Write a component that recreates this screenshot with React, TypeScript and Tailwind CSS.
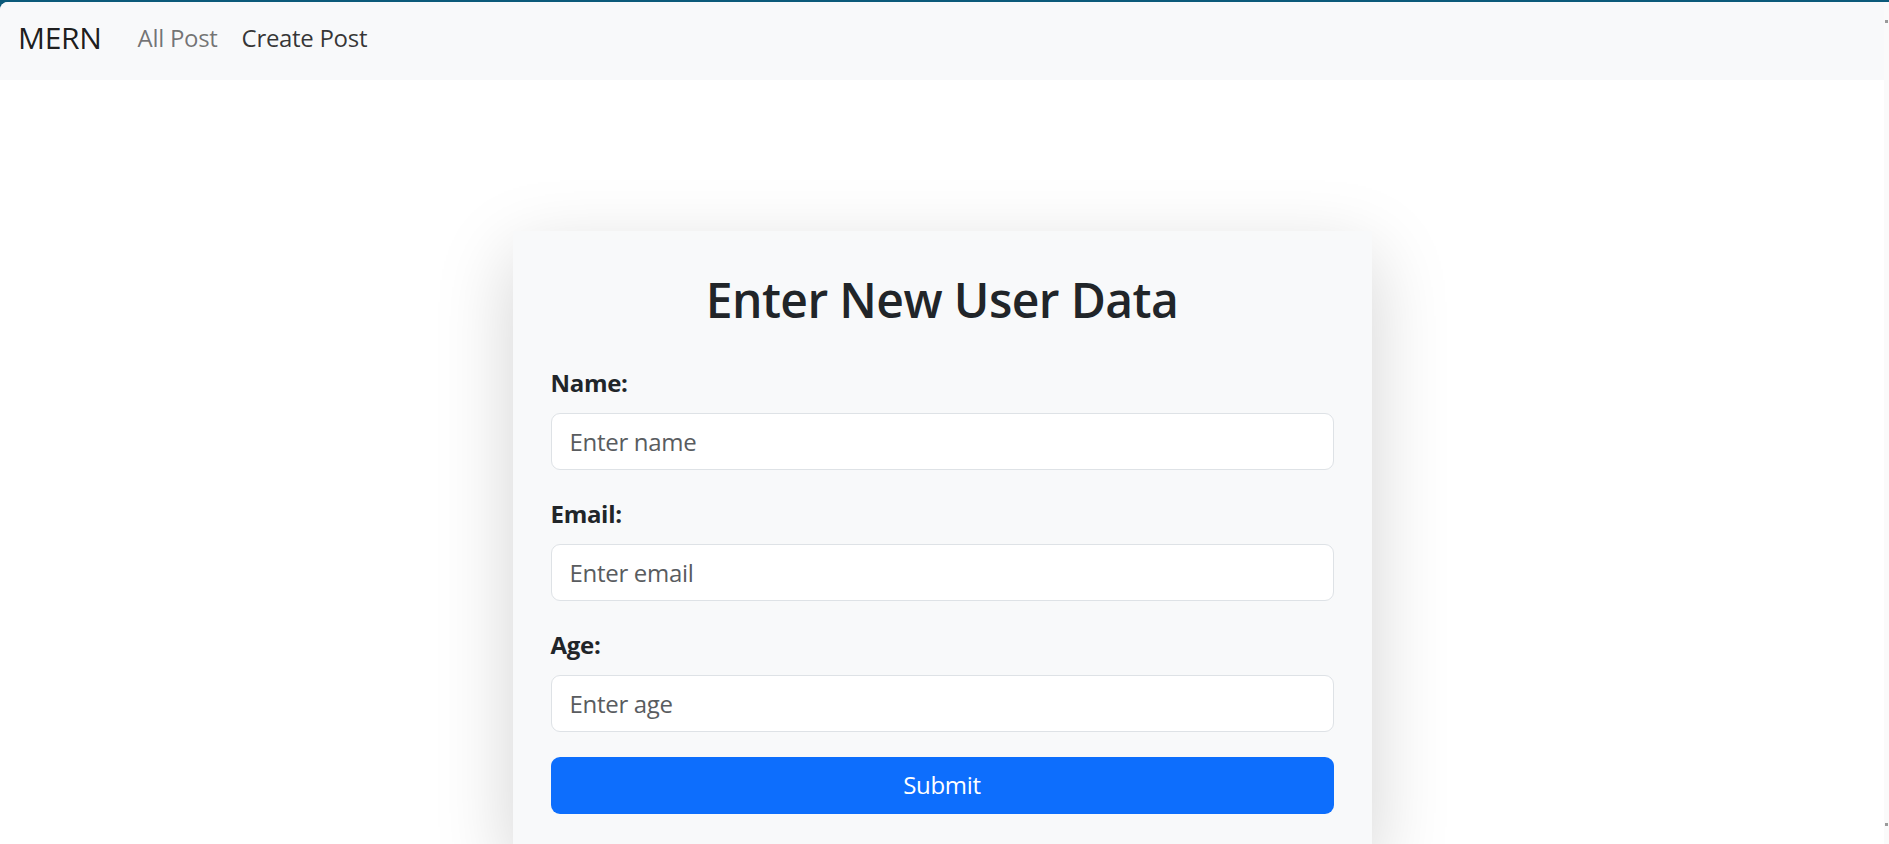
import { useState } from 'react'

const font = { fontFamily: '"Open Sans", "Noto Sans", sans-serif' }

export default function App() {
  const [form, setForm] = useState({ name: '', email: '', age: '' })

  const fields = [
    { key: 'name', label: 'Name:', type: 'text', placeholder: 'Enter name' },
    { key: 'email', label: 'Email:', type: 'email', placeholder: 'Enter email' },
    { key: 'age', label: 'Age:', type: 'number', placeholder: 'Enter age' },
  ] as const

  return (
    <div className="h-[844px] overflow-hidden bg-[#0b5a7a] pt-[2px]" style={font}>
      <div className="flex h-[842px] overflow-hidden rounded-tl-[8px] bg-white">
        <div className="flex-1">
          {/* Navbar */}
          <nav className="flex h-[78px] items-center bg-[#f8f9fa] px-[18px] pb-[7px]">
            <a href="#" className="mr-[24px] text-[30px] leading-none tracking-[-0.3px] text-black/90">
              MERN
            </a>
            <a href="#" className="px-[12px] text-[24px] tracking-[-0.3px] text-black/55">
              All Post
            </a>
            <a href="#" className="px-[12px] text-[24px] tracking-[-0.3px] text-black/80">
              Create Post
            </a>
          </nav>

          {/* Form card */}
          <div className="mx-auto mt-[151px] w-[859px] bg-[#f8f9fa] px-[38px] pt-[40px] pb-[36px] shadow-[0_24px_72px_rgba(0,0,0,0.175)]">
            <h2 className="mb-[36px] text-center text-[48px] font-semibold leading-[1.2] tracking-[-0.6px] text-[#212529]">
              Enter New User Data
            </h2>
            <form onSubmit={e => e.preventDefault()}>
              {fields.map(f => (
                <div key={f.key} className="mb-[26px]">
                  <label className="mb-[12px] block text-[24px] font-bold leading-[36px] tracking-[-0.3px] text-[#212529]">
                    {f.label}
                  </label>
                  <input
                    type={f.type}
                    value={form[f.key]}
                    onChange={e => setForm({ ...form, [f.key]: e.target.value })}
                    placeholder={f.placeholder}
                    className="block h-[57px] w-full rounded-[9px] border border-[#dee2e6] bg-white px-[18px] text-[24px] tracking-[-0.3px] text-[#212529] outline-none placeholder:text-[#595c5f]"
                  />
                </div>
              ))}
              <button
                type="submit"
                className="-mt-[1px] h-[57px] w-full rounded-[9px] bg-[#0d6efd] text-[24px] tracking-[-0.3px] text-white"
              >
                Submit
              </button>
            </form>
          </div>
        </div>

        {/* Scrollbar strip */}
        <div className="flex w-[5px] flex-col justify-between bg-[#fafafa] py-[18px]">
          <div className="mx-auto h-[3px] w-[3px] bg-[#9a9a9a]" />
          <div className="mx-auto h-[3px] w-[3px] bg-[#9a9a9a]" />
        </div>
      </div>
    </div>
  )
}
